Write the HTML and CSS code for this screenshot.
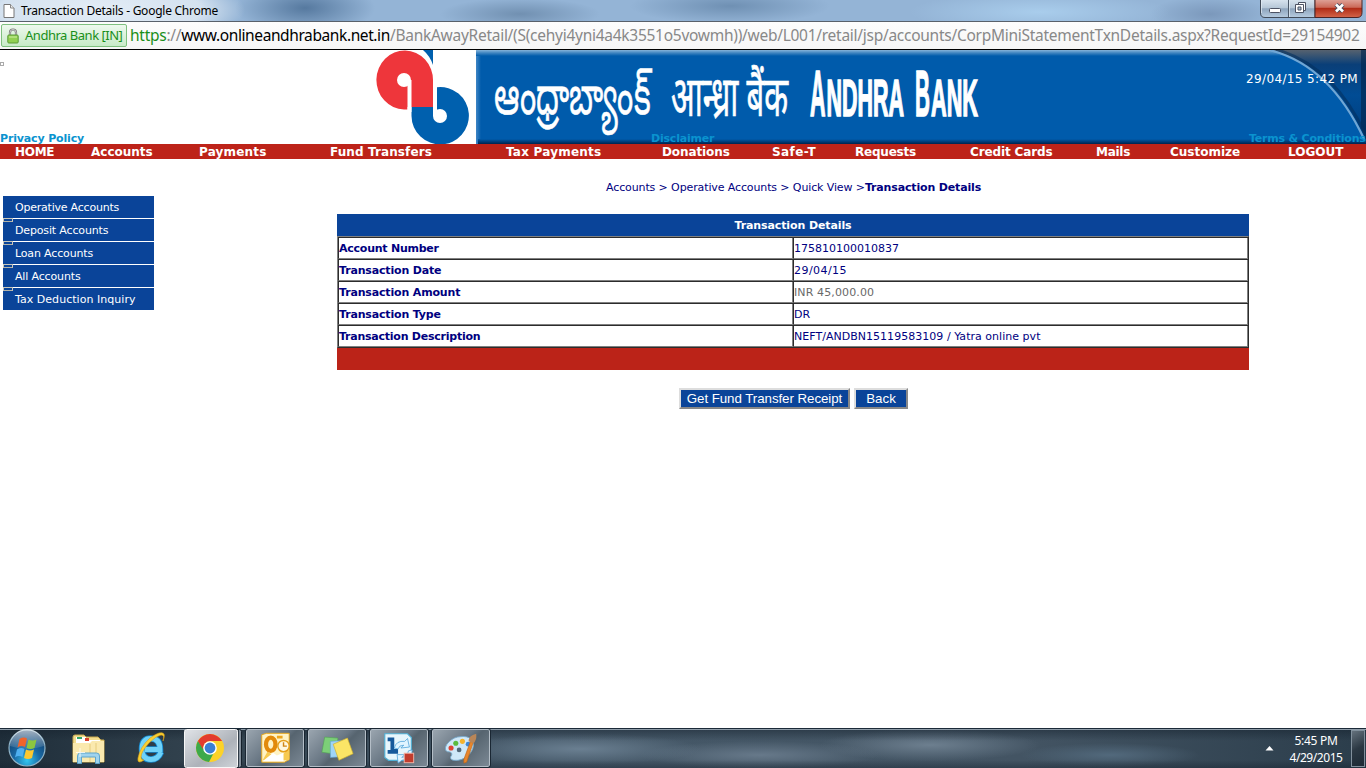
FILE: index.html
```html
<!DOCTYPE html>
<html lang="en">
<head>
<meta charset="utf-8">
<title>Transaction Details</title>
<link rel="stylesheet" href="styles.css">
</head>
<body>
<header class="titlebar">
  <svg class="doc" width="12" height="14" viewBox="0 0 12 14"><path d="M1 .5h6.500L11 4v9.500H1z" fill="#fff" stroke="#777"/><path d="M7.500.5V4H11" fill="#eee" stroke="#888"/></svg>
  <span class="wtitle">Transaction Details - Google Chrome</span>
  <svg class="winbtns" width="106" height="19" viewBox="0 0 106 19">
    <defs><linearGradient id="wb" x2="0" y2="1"><stop offset="0" stop-color="#dbe6f0"/><stop offset=".5" stop-color="#b4c5d6"/><stop offset=".52" stop-color="#8ea4bc"/><stop offset="1" stop-color="#b7cce0"/></linearGradient>
    <linearGradient id="wr" x2="0" y2="1"><stop offset="0" stop-color="#e0a79d"/><stop offset=".45" stop-color="#cb6958"/><stop offset=".5" stop-color="#b02b16"/><stop offset="1" stop-color="#d4664a"/></linearGradient></defs>
    <path d="M.5-1V13q0 4.500 4.500 4.500H55V-1z" fill="url(#wb)" stroke="#414b59"/>
    <path d="M55-1V17.500h42q5 0 5-5V-1z" fill="url(#wr)" stroke="#4a2527"/>
    <path d="M28.500 0V17" stroke="#4b5868"/><path d="M29.500 0V17M1.500 0V13" stroke="#e5eef6" opacity=".7"/>
    <rect x="9.500" y="8.500" width="11" height="4" rx="1" fill="#fff" stroke="#4c5263"/>
    <path d="M38.500 2.500h7v8h-7z" fill="#fff" stroke="#4c5263"/><path d="M35.500 4.500h8v8h-8z" fill="#fff" stroke="#4c5263"/><path d="M38 7h3v3h-3z" fill="#a9bdd0" stroke="#4c5263"/>
    <path d="M76 4.500l7 7M83 4.500l-7 7" stroke="#444b5e" stroke-width="4.500"/><path d="M76 4.500l7 7M83 4.500l-7 7" stroke="#fff" stroke-width="2.600"/>
  </svg>
</header>
<div class="toolbar">
  <span class="cert">
    <svg width="12" height="16" viewBox="0 0 12 16"><path d="M3 8V4.500a3 3 0 0 1 6 0V8" fill="none" stroke="#777" stroke-width="2.200"/><path d="M3 8V4.500a3 3 0 0 1 6 0V8" fill="none" stroke="#d5d5d5" stroke-width=".9"/><rect x=".8" y="7" width="10.400" height="8" rx="1" fill="#91d052" stroke="#5a9a37"/><path d="M2 9h8" stroke="#cdf0a0"/></svg>
    <span class="certname">Andhra Bank [IN]</span>
  </span>
  <span class="url"><span class="https">https</span>://<span class="host">www.onlineandhrabank.net.in</span>/BankAwayRetail/(S(cehyi4yni4a4k3551o5vowmh))/web/L001/retail/jsp/accounts/CorpMiniStatementTxnDetails.aspx?RequestId=29154902</span>
</div>
<section class="banner">
  <svg class="art" width="1366" height="94" viewBox="0 50 1366 94">
    <defs>
      <linearGradient id="top" x2="0" y2="1"><stop offset="0" stop-color="#86b4da"/><stop offset=".5" stop-color="#3e84c0"/><stop offset="1" stop-color="#005bab"/></linearGradient>
      <linearGradient id="lft"><stop offset="0" stop-color="#3f86c5"/><stop offset="1" stop-color="#005bab"/></linearGradient>
      <linearGradient id="bot" x2="0" y2="1"><stop offset="0" stop-color="#005bab"/><stop offset="1" stop-color="#00234d"/></linearGradient>
      <linearGradient id="cor" x2="0" y2="1"><stop offset="0" stop-color="#56626f"/><stop offset=".16" stop-color="#0a3f78"/><stop offset=".5" stop-color="#014c94"/><stop offset="1" stop-color="#003c7b"/></linearGradient>
    </defs>
    <rect x="476" y="50" width="890" height="94" fill="#005bab"/>
    <rect x="476" y="50" width="5" height="94" fill="url(#lft)"/>
    <rect x="476" y="50" width="890" height="6" fill="url(#top)"/>
    <rect x="478" y="139" width="888" height="5" fill="url(#bot)"/>
    <path d="M1272 50Q1330 66 1366 140V50z" fill="url(#cor)"/>
    <path d="M1361 50h5v88l-5-10z" fill="#02264f" opacity=".65"/>
    <path d="M1276 49.500Q1335 66 1367 138" fill="none" stroke="#03305f" stroke-width="3" opacity=".6"/>
    <path d="M1271 50.500Q1330 66 1364 139" fill="none" stroke="#6fa6d5" stroke-width="2.200"/>
    <path d="M407.500 109.500H404a28.300 29.500 0 1 1 29-29V107H407.500z" fill="#ee363b"/>
    <path d="M411.500 107H437V87.200A28.700 28.700 0 1 1 411.500 116z" fill="#0060ae"/>
    <path d="M407.500 80h4v32h-4zM433 82h4v34h-4z" fill="#fff"/>
    <circle cx="404" cy="80" r="7" fill="#fff"/>
    <circle cx="440" cy="116" r="7" fill="#fff"/>
    <path d="M423 50H433V65Q430 56 423 50z" fill="#0060ae"/>
    <g fill="#fff" stroke="#fff">
      <text class="indic" stroke-width=".3" transform="translate(494 113.500) scale(1 1.700)" textLength="156" lengthAdjust="spacingAndGlyphs" font-size="32">ఆంధ్రాబ్యాంక్</text>
      <text class="indic" stroke-width=".4" transform="translate(671 115.500) scale(1 1.750)" textLength="117" lengthAdjust="spacingAndGlyphs" font-size="32">आन्ध्रा बैंक</text>
      <g class="latin" stroke-width="1">
        <text transform="translate(810 116) scale(1 1.680)" textLength="15.500" lengthAdjust="spacingAndGlyphs" font-size="39">A</text>
        <text transform="translate(826.500 116) scale(1 1.680)" textLength="77.500" lengthAdjust="spacingAndGlyphs" font-size="31">NDHRA</text>
        <text transform="translate(915 116) scale(1 1.680)" textLength="15" lengthAdjust="spacingAndGlyphs" font-size="39">B</text>
        <text transform="translate(931 116) scale(1 1.680)" textLength="47" lengthAdjust="spacingAndGlyphs" font-size="31">ANK</text>
      </g>
    </g>
  </svg>
  <div class="bannertext">
    <span class="stamp">29/04/15 5:42 PM</span>
    <div class="links"><a class="l1">Privacy Policy</a><a class="l2">Disclaimer</a><a class="l3">Terms &amp; Conditions</a></div>
  </div>
  <i class="speck"></i>
</section>
<nav class="nav">
  <a>HOME</a><a>Accounts</a><a>Payments</a><a>Fund Transfers</a><a>Tax Payments</a><a>Donations</a><a>Safe-T</a><a>Requests</a><a>Credit Cards</a><a>Mails</a><a>Customize</a><a>LOGOUT</a>
</nav>
<main class="main">
  <aside class="side">
    <a>Operative Accounts</a><a>Deposit Accounts</a><a>Loan Accounts</a><a>All Accounts</a><a>Tax Deduction Inquiry</a>
  </aside>
  <section class="content">
    <p class="crumbs"><span>Accounts &gt; Operative Accounts &gt; Quick View &gt;</span><b>Transaction Details</b></p>
    <div class="tbl">
      <div class="thead">Transaction Details</div>
      <div class="tbody">
        <div class="row"><b class="k k1">Account Number</b><span class="v">175810100010837</span></div>
        <div class="row"><b class="k">Transaction Date</b><span class="v v2">29/04/15</span></div>
        <div class="row"><b class="k">Transaction Amount</b><span class="v amt">INR 45,000.00</span></div>
        <div class="row"><b class="k">Transaction Type</b><span class="v">DR</span></div>
        <div class="row"><b class="k k5">Transaction Description</b><span class="v v5">NEFT/ANDBN15119583109 / Yatra online pvt</span></div>
      </div>
      <div class="tfoot"></div>
    </div>
    <div class="actions"><button class="get">Get Fund Transfer Receipt</button><button class="back">Back</button></div>
  </section>
</main>
<footer class="taskbar">
  <svg class="tile" width="54" height="40" viewBox="0 0 54 40">
    <defs>
      <radialGradient id="orb" cx=".5" cy=".85" r=".8"><stop offset="0" stop-color="#35c5ef"/><stop offset=".45" stop-color="#1a6aa5"/><stop offset="1" stop-color="#0f3a66"/></radialGradient>
      <linearGradient id="gl" x2="0" y2="1"><stop offset="0" stop-color="#fff" stop-opacity=".65"/><stop offset="1" stop-color="#fff" stop-opacity=".08"/></linearGradient>
    </defs>
    <circle cx="27" cy="20" r="18" fill="url(#orb)" stroke="#8fb3c7" stroke-width="1.200"/>
    <path d="M10 18a17 17 0 0 1 34 0q-17 6-34 0z" fill="url(#gl)"/>
    <path d="M19.500 11q4-2.500 7.500-.5l-2 8.500q-4-2-7.500.5z" fill="#f0642b"/>
    <path d="M28.500 11.500q4 2 8 0l-2 8.500q-4 2-8 0z" fill="#8cc63f"/>
    <path d="M17 21.500q4-2.500 7.500-.5l-2 8q-4-2-7.500.5z" fill="#4fb0f0"/>
    <path d="M26 21.500q4 2 8 0l-2 8.500q-4 2-8 0z" fill="#fdc82f"/>
  </svg>
  <svg class="tile" width="62" height="40" viewBox="0 0 62 40">
    <path d="M19 9q0-2 2-2h9l2 2h12l3 3h3v22H19z" fill="#f3dd8f" stroke="#c9a94f"/>
    <path d="M22 9h10v3h14v3H22z" fill="#fff"/>
    <path d="M23 9h5v2h-5z" fill="#35a56b"/><path d="M31 10h4v3h-4z" fill="#d8422d"/><path d="M39 13h6v2h-6z" fill="#2b8ae0"/>
    <path d="M19 15h17l2-2h12v21H19z" fill="#fae9ae"/><path d="M36 16v18M42 15v19" stroke="#e6cc7c"/>
    <path d="M23.500 35.500V28q0-3 3-3h16q3 0 3 3v7.500h-4V29h-14v6.500z" fill="#9fd3ee" stroke="#5fa5cc"/>
    <path d="M26 20v9M22 24.500h9" stroke="#fff" opacity=".8"/>
  </svg>
  <svg class="tile" width="67" height="40" viewBox="0 0 67 40">
    <path d="M45 24q-3 7.500-10 7.500-9 0-9-10.500t9-10.500q9 0 9 11H29" fill="none" stroke="#1588cf" stroke-width="6.500"/>
    <path d="M45 24q-3 7.500-10 7.500-9 0-9-10.500t9-10.500q9 0 9 11H29" fill="none" stroke="#6fd2f8" stroke-width="4.800"/>
    <path d="M28 32q-7 5-6-2Q24 19 34 10q11-8 14-4 1 2-1 7 2-6-2-6-5 1-12 8-8 9-8 14 0 3 3 3z" fill="#f9cf32" stroke="#d59d15" stroke-width=".6"/>
  </svg>
  <svg class="tile" width="60" height="40" viewBox="0 0 60 40">
    <defs><linearGradient id="act" x2="1" y2="1"><stop offset="0" stop-color="#e1e4e8"/><stop offset=".6" stop-color="#adb2b9"/><stop offset="1" stop-color="#cfd4d9"/></linearGradient></defs>
    <rect x="1.500" y="1.500" width="57" height="38" rx="2" fill="#84909c" stroke="#14202b"/>
    <rect x="1.500" y="1.500" width="53" height="38" rx="2" fill="url(#act)" stroke="#f7f7f7"/><path d="M55.500 2v37" stroke="#2e3a45"/>
    <circle cx="27" cy="20" r="14" fill="#fcd228"/>
    <path d="M14.900 13A14 14 0 0 0 26 34l6-11.500-10-0.500z" fill="#3da94a"/>
    <path d="M14.900 13A14 14 0 0 1 39.100 13H27a7 7 0 0 0-6.500 9z" fill="#e33b2e"/>
    <circle cx="27" cy="20" r="6.800" fill="#fff"/><circle cx="27" cy="20" r="5.400" fill="#3b7fd4"/>
  </svg>
  <div class="apps">
  <svg class="app" width="58" height="38" viewBox="1 1 58 38">
    <path d="M16 6l5-1.500h24V32l-5 3H16z" fill="#fff3c4" stroke="#e7a519"/><path d="M22 24l10 6 13-8v11H17z" fill="#f7ca51"/><path d="M17 34l11-9 4 3 7-3v9z" fill="#fff"/>
    <ellipse cx="25.500" cy="16" rx="5" ry="7" fill="none" stroke="#e28a0b" stroke-width="4.500"/>
    <path d="M32 7h6v3h-6z" fill="#eea51c"/><circle cx="39" cy="18" r="6" fill="#fff8e0" stroke="#e5a01c" stroke-width="1.500"/><path d="M39 14v4h3.500" fill="none" stroke="#cf8515" stroke-width="1.500"/>
  </svg>
  <svg class="app" width="58" height="38" viewBox="1 1 58 38">
    <path d="M17 8.500l14 1-2 17-15-2z" fill="#7ccf78" stroke="#4f9d54" stroke-width=".6"/>
    <path d="M23 13l15-1 1 17-16 1z" fill="#9fd4f8" stroke="#5f9fce" stroke-width=".6"/>
    <path d="M26 16l15-6.500L47 26l-15 7z" fill="#fbe566" stroke="#cfae2a" stroke-width=".7"/>
  </svg>
  <svg class="app" width="58" height="38" viewBox="1 1 58 38">
    <path d="M15 5h24l4 4v24H19l-4-3z" fill="#e7f6fc" stroke="#4fb0d5" stroke-width="1.200"/>
    <path d="M18 9h7v12h4v5H18v-4h3v-9h-3z" fill="#16599b"/>
    <path d="M25 20q2-8 11-7l3-3 2 9-9 1 3-3q-5 0-6 4zM44 22q0 10-11 11l-4 3-1-9 8 0-3 3q6-1 7-7z" fill="#e0f4ff" stroke="#4aa0d8" stroke-width=".8"/>
    <rect x="35.500" y="25.500" width="10" height="10" fill="#c23c2d" stroke="#f2b3a5"/>
  </svg>
  <svg class="app" width="58" height="38" viewBox="1 1 58 38">
    <path d="M30 8c8-1 14 3 13 10-1 8-10 16-20 15-4 0-5-3-3-5 1-3-1-4-4-4-4-1-3-7 2-11 3-3 7-5 12-5z" fill="#cfe8f8" stroke="#79a9cb"/>
    <circle cx="19.500" cy="20" r="2.700" fill="#e04334"/><circle cx="24.500" cy="15" r="2.700" fill="#5bbb3f"/><circle cx="31.500" cy="13" r="2.700" fill="#f4b32e"/><circle cx="37.500" cy="16" r="2.500" fill="#3b86d8"/><circle cx="28" cy="22" r="2.500" fill="#52687a"/>
    <path d="M40 13l3 1-7 21-3 1 0-4z" fill="#e8862c" stroke="#b55f15" stroke-width=".6"/><path d="M38 13q0-6 8-8 1 7-3 10z" fill="#b98658"/>
  </svg>
  </div>
  <div class="tray"><svg width="9" height="5" viewBox="0 0 9 5"><path d="M4.500 0L8.500 4.500h-8z" fill="#fff"/></svg>
  <time class="clock"><span>5:45 PM</span><span class="date">4/29/2015</span></time></div>
  <i class="peek"></i>
</footer>
</body>
</html>
```
FILE: styles.css
```css
* { box-sizing: border-box; }
body { margin: 0; width: 1366px; height: 768px; overflow: hidden; background: #fff; font: 11px "DejaVu Sans", sans-serif; color: #000080; display: flex; flex-direction: column; white-space: nowrap; }

.titlebar { height: 21px; flex: none; display: flex; align-items: center; color: #000; font: 12px "Noto Sans", sans-serif;
  background:
    radial-gradient(ellipse 145px 40px at 100px 10px, rgba(232,240,248,.95), rgba(228,237,246,.8) 70%, transparent),
    radial-gradient(ellipse 70px 26px at 305px 8px, #56799f, transparent),
    radial-gradient(ellipse 80px 16px at 520px 14px, #7190b1, transparent),
    radial-gradient(ellipse 100px 18px at 730px 6px, #6f90b3, transparent),
    radial-gradient(ellipse 130px 20px at 1040px 12px, #a9cdec, transparent),
    radial-gradient(ellipse 60px 18px at 1210px 14px, #7b98bb, transparent),
    #94b4d6; }
.doc { margin: 0 6px 0 3px; }
.wtitle { letter-spacing: -.246px; }
.winbtns { margin-left: auto; align-self: flex-start; position: relative; }

.toolbar { height: 29px; flex: none; display: flex; align-items: center; background: linear-gradient(#fdfdfd, #f6f6f6); border-top: 1px solid #59616b; border-bottom: 1px solid #000; color: #888; padding-left: 1px; }
.cert { display: flex; align-items: center; flex: none; width: 126px; height: 23px; padding-left: 5px; gap: 6px; border: 1px solid #7fc07f; border-radius: 2px; background: linear-gradient(#eef9ee, #c8eac8); color: #1a8f1a; font: 13px "Noto Sans", sans-serif; letter-spacing: -.48px; }
.certname { position: relative; top: -1px; }
.url { margin-left: 3px; padding-bottom: 1px; font: 15.5px "Noto Sans", sans-serif; letter-spacing: -.27px; }
.https { color: #1a8f1a; }
.host { color: #000; letter-spacing: -.4px; }

.banner { height: 94px; flex: none; position: relative; }
.art { display: block; }
.indic { font-family: "Noto Sans", sans-serif; }
.latin { font-family: "Liberation Sans Narrow", "Liberation Sans", sans-serif; font-weight: bold; }
.bannertext { position: absolute; inset: 0; display: flex; flex-direction: column; justify-content: space-between; padding-top: 22px; }
.stamp { align-self: flex-end; margin-right: 8px; font-size: 12px; line-height: 15px; letter-spacing: .371px; color: #fff; }
.links { display: grid; grid-template-columns: 651px 598px 117px; font-weight: bold; line-height: 11px; color: #0a93cf; }
.l1 { letter-spacing: -.15px; }
.l2 { letter-spacing: -.2px; }
.l3 { letter-spacing: -.2px; }
.speck { position: absolute; left: 0; top: 12px; width: 4px; height: 4px; border: 1px solid #aaa; }

.nav { height: 15px; flex: none; background: #bd2319; color: #fff; font: bold 12px/17px "DejaVu Sans", sans-serif; display: grid; padding-left: 15px;
  grid-template-columns: 76px 108px 131px 176px 156px 110px 83px 115px 126px 74px 118px 78px; }
.nav a:nth-child(1) { letter-spacing: -.3px; }
.nav a:nth-child(3) { letter-spacing: .18px; }
.nav a:nth-child(4) { letter-spacing: .11px; }
.nav a:nth-child(5) { letter-spacing: .22px; }
.nav a:nth-child(6) { letter-spacing: -.1px; }
.nav a:nth-child(7) { letter-spacing: .414px; }
.nav a:nth-child(8) { letter-spacing: -.209px; }
.nav a:nth-child(9) { letter-spacing: -.13px; }
.nav a:nth-child(10) { letter-spacing: -.284px; }

.main { flex: 1; display: flex; align-items: flex-start; }
.side { margin: 37px 183px 0 3px; width: 151px; display: flex; flex-direction: column; gap: 1px; color: #fff; line-height: 24px; }
.side a { position: relative; height: 22px; padding-left: 12px; background: #0a4499; letter-spacing: -.15px; }
.side a:first-child { letter-spacing: -.22px; }
.side a:last-child { letter-spacing: .04px; }
.side a + a::before { content: ""; position: absolute; left: 0; top: -1px; width: 10px; height: 4px; box-sizing: border-box; border: 1px solid #c8c8bd; border-bottom-color: #b4b4aa; background: #0a4499; }
.content { width: 912px; }
.crumbs { margin: 22px 0 0; padding-left: 269px; line-height: 14px; letter-spacing: -.115px; }
.crumbs b { letter-spacing: -.15px; }
.tbl { margin-top: 19px; }
.thead { height: 22px; background: #0a4499; color: #fff; font-weight: bold; text-align: center; line-height: 24px; letter-spacing: -.109px; }
.tbody { border-top: 1px solid #808080; border-left: 1px solid #808080; border-right: 1px solid #2c2c2c; border-bottom: 1px solid #2c2c2c; }
.row { display: grid; grid-template-columns: 455px 455px; grid-template-rows: 21px; height: 22px; border-top: 1px solid #2c2c2c; line-height: 21px; }
.k, .v { height: 21px; border-left: 1px solid #2c2c2c; border-right: 1px solid #808080; border-bottom: 1px solid #808080; }
.k { letter-spacing: -.16px; }
.k1, .k5 { letter-spacing: -.24px; }
.v2 { letter-spacing: .449px; }
.v5 { letter-spacing: .03px; }
.amt { color: #696969; letter-spacing: .12px; }
.tfoot { height: 22px; background: #bb2318; }
.actions { display: flex; gap: 4px; margin: 18px 0 0 342px; }
button { height: 21px; padding: 0; border: 2px solid; border-color: #ddd #888 #888 #ddd; background: #0a4499; color: #fff; font: 13.333px "Liberation Sans", sans-serif; }
.get { width: 171px; letter-spacing: -.06px; }
.back { width: 54px; }

.taskbar { height: 40px; flex: none; display: flex; border-top: 1px solid #1b2a38; box-shadow: inset 0 1px #8e9ca8; color: #fff; font: 12px "Noto Sans", sans-serif;
  background:
    linear-gradient(rgba(20,32,44,.5), transparent 30%, transparent 80%, rgba(20,32,44,.4)),
    radial-gradient(ellipse 120px 16px at 580px 20px, #6a7f91, transparent),
    radial-gradient(ellipse 120px 14px at 760px 26px, #67798a, transparent),
    radial-gradient(ellipse 110px 16px at 930px 16px, #6d7f8f, transparent),
    radial-gradient(ellipse 90px 12px at 1110px 26px, #52697c, transparent),
    linear-gradient(90deg, #1f2e3a, #33434f 15%, #455868 40%, #435463 75%, #2b3d4b); }
.tile { flex: none; margin-top: -1px; }
.apps { display: flex; gap: 4px; padding: 0 0 0 3px; }
.app { flex: none; border: 1px solid #b4bec7; outline: 1px solid #1a2733; border-radius: 2px; background: linear-gradient(135deg, #9aa5af, #697784 45%, #56646f 55%, #7b8894); }
.tray { display: flex; align-items: center; margin-left: auto; gap: 15px; }
.clock { display: flex; flex-direction: column; align-items: center; line-height: 17px; letter-spacing: -.3px; width: 54px; }
.date { letter-spacing: -.443px; }
.peek { width: 14px; margin: 1px 1px 1px 8px; border: 1px solid #81909c; background: linear-gradient(150deg, #64717c, #2b3843 50%, #1d2a35); }
```
